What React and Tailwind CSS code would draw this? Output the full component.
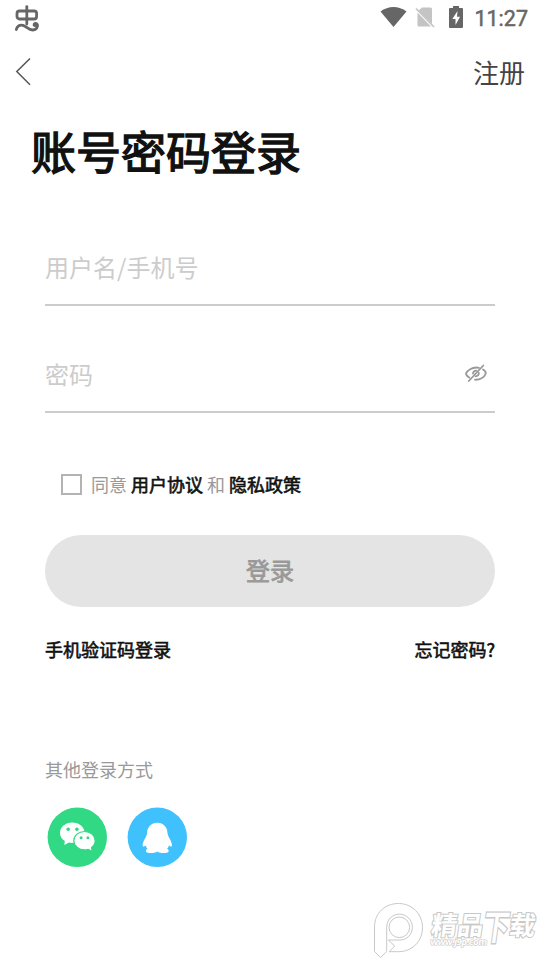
import React, { useState } from 'react';

const StatusBar = () => (
  <div className="flex h-9 items-center justify-between pl-3.5 pr-3">
    <svg className="h-7 w-7" viewBox="0 0 28 28" fill="none" stroke="#666" strokeWidth="2.8" strokeLinecap="round">
      <rect x="3" y="7" width="19.6" height="8" rx="2.5" />
      <path d="M12.8 2.600V20" />
      <path d="M2.300 25.600C3 22 6 20.500 9 21.400C13 22.800 14.500 26 18.500 26C22 26 23.800 23.500 23.500 21C23 18.800 20 19 20.100 21.200" />
      <circle cx="21.300" cy="21.400" r="1.500" fill="#666" stroke="none" />
    </svg>
    <div className="flex items-center">
      <div className="flex items-center pb-0.5">
        <svg className="h-[22px] w-[27px]" viewBox="0 0 27 22" fill="#666">
          <path d="M0.500 5.500C8 -0.500 19 -0.500 26.500 5.500L13.500 21Z" />
        </svg>
        <svg className="ml-2 h-[22px] w-5" viewBox="0 0 20 22">
          <path d="M7 1.500H15.500Q17 1.500 17 3V18L3.500 4.500ZM2.500 6.500L16 20.500H4Q2.500 20.500 2.500 19Z" fill="#c4c4c4" />
          <path d="M1 2.500L19 21" stroke="#c4c4c4" strokeWidth="1.700" />
        </svg>
        <svg className="ml-3.5 h-[22px] w-3.5" viewBox="0 0 14 22">
          <path d="M4 0H10V2H13Q14 2 14 3V21Q14 22 13 22H1Q0 22 0 21V3Q0 2 1 2H4Z" fill="#666" />
          <path d="M8.500 5L3.300 13H6.500V19L11 10.800H8Z" fill="#fff" />
        </svg>
      </div>
      <span className="ml-[11px] pt-0.5 font-['Roboto',sans-serif] text-[21.5px] leading-[34px] font-normal text-[#666] [-webkit-text-stroke:0.5px_#666]">11:27</span>
    </div>
  </div>
);

const EyeOffIcon = () => (
  <svg className="h-[22px] w-[22px]" viewBox="0 0 22 22" fill="none" stroke="#999" strokeWidth="1.800" strokeLinecap="round">
    <path d="M4.300 14.500C2.500 13.500 1 12 1 10.500C2.500 7 7 4.500 11.500 4.500C12.500 4.500 13.200 4.600 14 4.800" />
    <path d="M18 6.500C19.800 7.500 20.800 9 20.800 10.500C19.500 14.500 14.500 17 10 16.700" />
    <path d="M18.300 2.500L3.800 18" />
    <path d="M8 10.500C8.300 8.500 9.500 7.500 11.300 7.600M10.500 13.300C12.500 13.300 14 12 13.800 10" />
  </svg>
);

const WechatIcon = () => (
  <svg className="h-[60px] w-[60px]" viewBox="0 0 60 60">
    <circle cx="30.300" cy="30.300" r="29.700" fill="#31d985" />
    <path d="M25.200 15.500C18.500 15.500 13 20 13 26C13 29.300 14.800 32.200 17.800 34L17.300 38L22 35.500C23.100 35.800 24.300 35.900 25.500 35.900C32.100 35.900 37.600 31.500 37.600 26C37.600 20 32.100 15.500 25.200 15.500Z" fill="#fff" />
    <path d="M37.500 24.500C31.700 24.500 26.800 28.500 26.800 33.700C26.800 38.900 31.700 42.900 37.500 42.900C38.800 42.900 40.100 42.700 41.200 42.300L45.300 44.500L44.500 40.500C46.700 38.900 48.200 36.400 48.200 33.700C48.200 28.500 43.300 24.500 37.500 24.500Z" fill="#fff" stroke="#31d985" strokeWidth="1.200" />
    <g fill="#31d985">
      <circle cx="21.200" cy="22.200" r="1.800" />
      <circle cx="29.900" cy="22.200" r="1.800" />
      <circle cx="34.100" cy="30.800" r="1.500" />
      <circle cx="40.900" cy="30.800" r="1.500" />
    </g>
  </svg>
);

const QQIcon = () => (
  <svg className="h-[60px] w-[60px]" viewBox="0 0 60 60">
    <circle cx="30.300" cy="30.300" r="29.700" fill="#3fc1fd" />
    <path d="M30.300 15.700C24.100 15.700 20.300 20 20.100 25.900C20 29.400 15.800 33.800 15.600 37.900C15.600 39.900 17.100 39.700 18.600 38.400C18.900 39.400 19.600 40.700 20.500 41.700C18.100 42.600 18.200 45.900 22.300 46C26.300 46.300 28.800 45.800 30.300 44.600C31.800 45.800 34.300 46.300 38.300 46C42.400 45.900 42.500 42.600 40.100 41.700C41 40.700 41.700 39.400 42 38.400C43.500 39.700 45 39.900 45 37.900C44.800 33.800 40.600 29.400 40.500 25.900C40.300 20 36.500 15.700 30.300 15.700Z" fill="#fff" />
  </svg>
);

const Watermark = () => (
  <div className="pointer-events-none absolute top-[901px] left-[372px] flex">
    <svg className="h-[58px] w-[54px] shrink-0" viewBox="0 0 54 58" fill="#fff" stroke="#c8c8c8" strokeWidth="1">
      <path d="M2.500 50.500V26C2.500 12 13 2.500 26.500 2.500C40 2.500 50.500 13 50.500 26.500C50.500 40.500 40 50.700 26.500 50.700H17.300L22.700 45L16.300 39H28C35 39 40.400 33.500 40.400 26.300C40.400 19 34.500 13.200 27.300 13.200C20 13.200 14.700 19 14.700 26.300V50.500L8.500 56.500Z" />
      <circle cx="27.300" cy="26.300" r="10.300" />
    </svg>
    <div className="relative h-[58px] w-[112px] -skew-x-[8deg] font-['Noto_Sans_CJK_SC',sans-serif] font-bold whitespace-nowrap text-white [paint-order:stroke_fill] [-webkit-text-stroke:2px_#c8c8c8]">
      <div className="flex pt-[7px] pl-[5px] text-[26px] leading-8">
        <span>精品</span>
        <span className="-mt-[4px] origin-top scale-y-[1.35]">下</span>
        <span>载</span>
      </div>
      <div className="absolute top-[35px] left-1.5 font-['Open_Sans',sans-serif] text-[9px] leading-3 font-bold tracking-[-0.4px] [-webkit-text-stroke:1.2px_#c8c8c8]">www.j9p.com</div>
    </div>
  </div>
);

const App = () => {
  const [username, setUsername] = useState('');
  const [password, setPassword] = useState('');
  const [agreed, setAgreed] = useState(false);

  return (
    <div className="relative h-[960px] w-[540px] overflow-hidden bg-white font-['Noto_Sans_CJK_SC',sans-serif] text-[#111]">
      <StatusBar />

      <div className="flex h-[72px] items-center justify-between pr-[15px] pl-[15px]">
        <button>
          <svg className="h-7 w-4" viewBox="0 0 16 28" fill="none" stroke="#555" strokeWidth="1.500">
            <path d="M15 0.500L1.800 13.500L15 26.700" />
          </svg>
        </button>
        <button className="pb-px text-[26px] leading-9 text-[#444]">注册</button>
      </div>

      <h1 className="mt-[9px] ml-[31px] h-[68px] text-[45px] leading-[68px] font-normal [-webkit-text-stroke:1.4px_#111]">账号密码登录</h1>

      <div className="mx-[45px]">
        <div className="mt-[45px] h-[76px] border-b-2 border-[#ccc]">
          <input
            value={username}
            onChange={(e) => setUsername(e.target.value)}
            placeholder="用户名/手机号"
            className="h-[72px] w-full text-2xl outline-none placeholder:text-[#ccc]"
          />
        </div>

        <div className="mt-[31px] flex h-[76px] items-start border-b-2 border-[#ccc] pr-2">
          <input
            type="password"
            value={password}
            onChange={(e) => setPassword(e.target.value)}
            placeholder="密码"
            className="h-[72px] min-w-0 flex-1 text-2xl outline-none placeholder:text-[#ccc]"
          />
          <div className="mt-[26px]">
            <EyeOffIcon />
          </div>
        </div>

        <div className="mt-[57px] ml-4 flex h-7 items-center text-lg">
          <button onClick={() => setAgreed(!agreed)} className="mr-[9px] h-[21px] w-[21px] border-2 border-[#b3b3b3]">
            {agreed && <span className="block h-full w-full bg-[#111]" />}
          </button>
          <span className="text-[#999]">同意</span>
          <span className="mx-1 [-webkit-text-stroke:0.6px_#111]">用户协议</span>
          <span className="text-[#999]">和</span>
          <span className="ml-1 [-webkit-text-stroke:0.6px_#111]">隐私政策</span>
        </div>

        <button className="mt-[37px] h-[72px] w-full rounded-full bg-[#e4e4e4] pb-0.5 text-2xl text-[#999] [-webkit-text-stroke:0.8px_#999]">登录</button>

        <div className="mt-7 flex h-7 items-center justify-between text-lg [-webkit-text-stroke:0.6px_#111]">
          <span>手机验证码登录</span>
          <span>忘记密码?</span>
        </div>

        <div className="mt-[92px] text-lg leading-7 text-[#999]">其他登录方式</div>

        <div className="mt-6 ml-[2px] flex gap-5">
          <WechatIcon />
          <QQIcon />
        </div>
      </div>

      <Watermark />
    </div>
  );
};

export default App;
